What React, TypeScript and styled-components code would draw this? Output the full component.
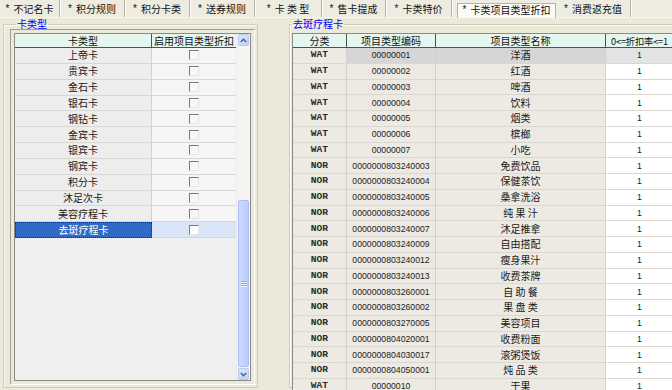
import React from 'react';
import styled, { createGlobalStyle, css } from 'styled-components';

const GlobalStyle = createGlobalStyle`
  html, body { margin: 0; padding: 0; background: #ECE9D8; }
  body { font-family: "Noto Sans CJK SC", "Liberation Sans", sans-serif; }
  * { box-sizing: border-box; }
`;

const Screen = styled.div`
  width: 672px;
  height: 390px;
  overflow: hidden;
  background: #ECE9D8;
  display: flex;
  flex-direction: column;
  font-family: "Noto Sans CJK SC", sans-serif;
  font-size: 10px;
  color: #111;
`;

const TabBar = styled.div`
  display: flex;
  height: 18px;
  flex: none;
  background: #EEECE1;
  border-bottom: 1px solid #F6F5EE;
`;

const Tab = styled.div<{ $w: number; $active?: boolean }>`
  width: ${(p) => p.$w}px;
  flex: none;
  display: flex;
  align-items: center;
  justify-content: center;
  white-space: nowrap;
  font-size: 10px;
  line-height: 10px;
  color: #111;
  border-right: 1px solid #B4B1A2;
  box-shadow: 1px 0 0 #FFFFFF;
  ${(p) =>
    p.$active &&
    css`
      margin: 3px 0 -1px 5px;
      align-items: flex-start;
      padding-top: 1px;
      background: #FBFBF9;
      border: 1px solid #B7B4A5;
      border-bottom: none;
      box-shadow: none;
    `}
`;

const Star = styled.span`
  margin-right: 4px;
  font-family: "Liberation Sans", sans-serif;
  font-size: 10px;
`;

const Main = styled.div`
  display: flex;
  flex: 1;
  padding: 1px 0 0 3px;
  min-height: 0;
`;

const Group = styled.fieldset<{ $w: number; $pad: string; $gap?: number }>`
  margin: 0 0 0 ${(p) => p.$gap ?? 0}px;
  min-width: 0;
  flex: none;
  width: ${(p) => p.$w}px;
  height: 369px;
  border: 1px solid #CFCCBC;
  box-shadow: inset 1px 1px 0 #FAF9F4;
  padding: ${(p) => p.$pad};
`;

const Legend = styled.legend<{ $ml: number }>`
  margin-left: ${(p) => p.$ml}px;
  padding: 0 1px;
  font-size: 10px;
  line-height: 10px;
  color: #0000FF;
`;

const Sunken = styled.div`
  height: 356px;
  border: 1px solid;
  border-color: #A19E90 #FFFFFF #FFFFFF #A19E90;
  padding: 3px;
`;

const GridFrame = styled.div<{ $h: number }>`
  height: ${(p) => p.$h}px;
  border: 1px solid #8A8A8A;
  display: flex;
  background: #EFEFEF;
  overflow: hidden;
`;

const Table = styled.div`
  flex: 1;
  display: flex;
  flex-direction: column;
  min-width: 0;
`;

const Row = styled.div<{ $cols: string; $h: number }>`
  display: grid;
  grid-template-columns: ${(p) => p.$cols};
  height: ${(p) => p.$h}px;
  flex: none;
`;

const HeadCell = styled.div<{ $tight?: boolean }>`
  background: #E4F6EF;
  border-right: 1px solid #505050;
  border-bottom: 1px solid #505050;
  display: flex;
  align-items: center;
  justify-content: center;
  font-size: ${(p) => (p.$tight ? '9.3px' : '10px')};
  letter-spacing: ${(p) => (p.$tight ? '-0.2px' : '0')};
  line-height: 10px;
  white-space: nowrap;
  overflow: hidden;
  color: #111;
`;

type Kind = 'card' | 'check' | 'cls' | 'code' | 'name' | 'rate';

const Cell = styled.div<{ $kind: Kind; $sel?: boolean; $cur?: boolean }>`
  display: flex;
  align-items: center;
  justify-content: center;
  white-space: nowrap;
  overflow: hidden;
  border-right: 1px solid #D3D0C9;
  border-bottom: 1px solid #DAD7D0;
  color: #1A1A1A;
  font-size: 10px;
  line-height: 10px;
  background: ${(p) =>
    p.$kind === 'card' ? '#EDEDED' : p.$kind === 'check' ? '#F5F5F5' : p.$kind === 'rate' ? '#FFFFFF' : '#EDEAE4'};
  ${(p) =>
    (p.$kind === 'code' || p.$kind === 'rate') &&
    css`
      font-family: "Liberation Sans", sans-serif;
      font-size: 8.7px;
      color: #222;
    `}
  ${(p) =>
    p.$kind === 'cls' &&
    css`
      font-family: "Liberation Mono", monospace;
      font-weight: bold;
      font-size: 9.6px;
      color: #2A2A2A;
    `}
  ${(p) =>
    p.$cur &&
    css`
      background: ${p.$kind === 'rate' ? '#E3E3E3' : '#D6D6D6'};
    `}
  ${(p) =>
    p.$sel &&
    p.$kind === 'card' &&
    css`
      background: #316AC5;
      color: #FFFFFF;
      border: 1px dotted #2A2A2A;
    `}
  ${(p) =>
    p.$sel &&
    p.$kind === 'check' &&
    css`
      background: #DAE6F8;
    `}
`;

const CheckBox = styled.span<{ $sel?: boolean }>`
  width: 10px;
  height: 10px;
  border-top: 1px solid #7A7A7A;
  border-left: 1px solid #7A7A7A;
  border-right: 1px solid #E4E4E4;
  border-bottom: 1px solid #E4E4E4;
  background: ${(p) => (p.$sel ? '#FFFFFF' : '#F7F7F7')};
`;

const Empty = styled.div`
  flex: 1;
  background: #EFEFEF;
`;

const ScrollBar = styled.div`
  width: 14px;
  flex: none;
  display: flex;
  flex-direction: column;
  background: #F5F4F0;
  border-left: 1px solid #ECECEC;
`;

const ScrollButton = styled.div`
  height: 12px;
  flex: none;
  margin: 0 1px;
  border: 1px solid #B6C8F3;
  border-radius: 2px;
  background: linear-gradient(135deg, #DCE6FD, #BFD0F8);
  display: flex;
  align-items: center;
  justify-content: center;
`;

const Track = styled.div`
  flex: 1;
  display: flex;
  flex-direction: column;
  justify-content: flex-end;
  padding-bottom: 1px;
`;

const Thumb = styled.div`
  height: 167px;
  margin: 0 1px;
  border: 1px solid #A9BEF2;
  border-radius: 2px;
  background: linear-gradient(90deg, #CCDAFD, #BACDF8);
  display: flex;
  flex-direction: column;
  align-items: center;
  justify-content: center;
  gap: 1px;
`;

const Grip = styled.span`
  width: 6px;
  height: 1px;
  background: #8EA8EA;
  box-shadow: 0 1px 0 #EEF3FE;
`;

const RightFrame = styled.div`
  height: 400px;
  border: 1px solid #8A8A8A;
  border-bottom: none;
  display: flex;
  flex-direction: column;
  overflow: hidden;
  background: #ECE9D8;
`;

const Chevron = ({ up }: { up?: boolean }) => (
  <svg width="7" height="5" viewBox="0 0 7 5">
    <path
      d={up ? 'M0.8 4 L3.5 1.3 L6.2 4' : 'M0.8 1 L3.5 3.7 L6.2 1'}
      fill="none"
      stroke="#4D6185"
      strokeWidth="1.4"
    />
  </svg>
);

const tabs: { label: string; w: number; active?: boolean }[] = [
  { label: '不记名卡', w: 60 },
  { label: '积分规则', w: 65 },
  { label: '积分卡类', w: 65 },
  { label: '送券规则', w: 65 },
  { label: '卡 类 型', w: 67 },
  { label: '售卡提成', w: 64 },
  { label: '卡类特价', w: 66 },
  { label: '卡类项目类型折扣', w: 99, active: true },
  { label: '消费返充值', w: 75 },
];

const cards = [
  '上帝卡', '贵宾卡', '金石卡', '银石卡', '钢钻卡', '金宾卡',
  '银宾卡', '钢宾卡', '积分卡', '沐足次卡', '美容疗程卡', '去斑疗程卡',
];

const items: [string, string, string][] = [
  ['WAT', '00000001', '洋酒'],
  ['WAT', '00000002', '红酒'],
  ['WAT', '00000003', '啤酒'],
  ['WAT', '00000004', '饮料'],
  ['WAT', '00000005', '烟类'],
  ['WAT', '00000006', '槟榔'],
  ['WAT', '00000007', '小吃'],
  ['NOR', '0000000803240003', '免费饮品'],
  ['NOR', '0000000803240004', '保健茶饮'],
  ['NOR', '0000000803240005', '桑拿洗浴'],
  ['NOR', '0000000803240006', '纯 果 汁'],
  ['NOR', '0000000803240007', '沐足推拿'],
  ['NOR', '0000000803240009', '自由搭配'],
  ['NOR', '0000000803240012', '瘦身果汁'],
  ['NOR', '0000000803240013', '收费茶牌'],
  ['NOR', '0000000803260001', '自 助 餐'],
  ['NOR', '0000000803260002', '果 盘 类'],
  ['NOR', '0000000803270005', '美容项目'],
  ['NOR', '0000000804020001', '收费粉面'],
  ['NOR', '0000000804030017', '滚粥煲饭'],
  ['NOR', '0000000804050001', '炖 品 类'],
  ['WAT', '00000010', '干果'],
];

const LEFT_COLS = '137px 85px';
const RIGHT_COLS = '54px 89px 170px 68px';

export default function App() {
  return (
    <>
      <GlobalStyle />
      <Screen>
        <TabBar>
          {tabs.map((t) => (
            <Tab key={t.label} $w={t.w} $active={t.active}>
              <Star>*</Star>
              {t.label}
            </Tab>
          ))}
        </TabBar>
        <Main>
          <Group $w={255} $pad="0 2px 1px 6px">
            <Legend $ml={6}>卡类型</Legend>
            <Sunken>
              <GridFrame $h={348}>
                <Table>
                  <Row $cols={LEFT_COLS} $h={14}>
                    <HeadCell>卡类型</HeadCell>
                    <HeadCell>启用项目类型折扣</HeadCell>
                  </Row>
                  {cards.map((c, i) => {
                    const sel = i === cards.length - 1;
                    return (
                      <Row key={c} $cols={LEFT_COLS} $h={15.85}>
                        <Cell $kind="card" $sel={sel}>{c}</Cell>
                        <Cell $kind="check" $sel={sel}>
                          <CheckBox $sel={sel} />
                        </Cell>
                      </Row>
                    );
                  })}
                  <Empty />
                </Table>
                <ScrollBar>
                  <ScrollButton>
                    <Chevron up />
                  </ScrollButton>
                  <Track>
                    <Thumb>
                      <Grip />
                      <Grip />
                      <Grip />
                    </Thumb>
                  </Track>
                  <ScrollButton>
                    <Chevron />
                  </ScrollButton>
                </ScrollBar>
              </GridFrame>
            </Sunken>
          </Group>
          <Group $w={390} $pad="4px 0 0 2px" $gap={31}>
            <Legend $ml={0}>去斑疗程卡</Legend>
            <RightFrame>
              <Row $cols={RIGHT_COLS} $h={14}>
                <HeadCell>分类</HeadCell>
                <HeadCell>项目类型编码</HeadCell>
                <HeadCell>项目类型名称</HeadCell>
                <HeadCell $tight>0&lt;=折扣率&lt;=1</HeadCell>
              </Row>
              {items.map(([cls, code, name], i) => (
                <Row key={code} $cols={RIGHT_COLS} $h={15.75}>
                  <Cell $kind="cls">{cls}</Cell>
                  <Cell $kind="code" $cur={i === 0}>{code}</Cell>
                  <Cell $kind="name" $cur={i === 0}>{name}</Cell>
                  <Cell $kind="rate" $cur={i === 0}>1</Cell>
                </Row>
              ))}
            </RightFrame>
          </Group>
        </Main>
      </Screen>
    </>
  );
}
